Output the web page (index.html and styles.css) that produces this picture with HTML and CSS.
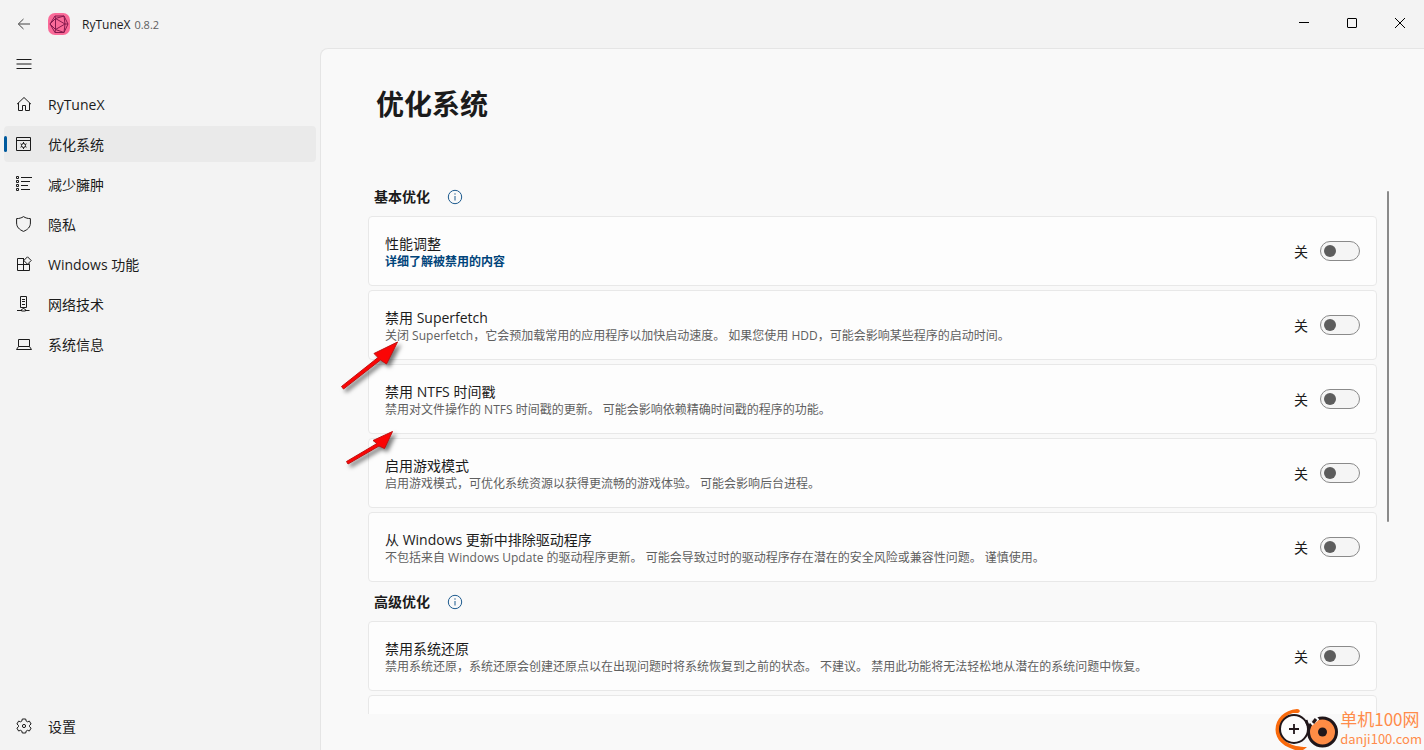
FILE: index.html
```html
<!DOCTYPE html>
<html lang="zh-CN">
<head>
<meta charset="utf-8">
<meta name="viewport" content="width=device-width, initial-scale=1">
<title>RyTuneX</title>
<link rel="stylesheet" href="styles.css">
</head>
<body>
<div class="app">
  <header class="titlebar">
    <button class="back" type="button" aria-label="返回">
      <svg class="icon" viewBox="0 0 16 16"><path d="M14 8H2.500M7.500 3L2.300 8l5.200 5"/></svg>
    </button>
    <svg class="logo" viewBox="0 0 22 22">
      <rect width="22" height="22" rx="7" fill="#fa6a98"/>
      <g fill="none" stroke="#85194d" stroke-width="1" stroke-linejoin="round">
        <path d="M7 3h9l4 8-4 8.500H7L2 11zM7.500 5.500v11L17 11z"/>
        <path d="M7 3l.5 2.500L16 3l1 8h3M2 11l5.500-5.500M2 11l5.500 5.500-.5 3M7.500 16.500l8.500 3 1-8.500"/>
      </g>
    </svg>
    <span class="app-name">RyTuneX</span>
    <span class="app-version">0.8.2</span>
    <div class="window-buttons">
      <button type="button" aria-label="最小化"><svg class="icon black" viewBox="0 0 16 16"><path d="M3 7.500h10"/></svg></button>
      <button type="button" aria-label="最大化"><svg class="icon black" viewBox="0 0 16 16"><rect x="3.500" y="3.500" width="9" height="9" rx=".5"/></svg></button>
      <button type="button" aria-label="关闭"><svg class="icon black" viewBox="0 0 16 16"><path d="M3 3l10 10M13 3L3 13"/></svg></button>
    </div>
  </header>

  <div class="body">
    <nav class="sidebar">
      <button class="menu" type="button" aria-label="菜单">
        <svg class="icon" viewBox="0 0 16 16"><path d="M.5 3.500h15M.5 8h15M.5 12.500h15"/></svg>
      </button>
      <a class="nav-item" href="#home">
        <svg class="icon" viewBox="0 0 16 16"><path d="M1 8.200L8 1.500l7 6.700M2.500 7v7.500h4V9.500h3v5h4V7"/></svg>
        <span>RyTuneX</span></a>
      <a class="nav-item active" href="#optimize">
        <svg class="icon" viewBox="0 0 16 16"><path d="M.5 1.500h14v13H.5zM.5 4.500h14"/><circle cx="7.500" cy="9.500" r="2"/><path d="M7.500 6v1.500M7.500 11.500V13M4.500 7.800l1.300.7M9.200 10.500l1.300.7M4.500 11.200l1.300-.7M9.200 8.500l1.300-.7"/></svg>
        <span>优化系统</span></a>
      <a class="nav-item" href="#debloat">
        <svg class="icon" viewBox="0 0 16 16"><path d="M.5.500h2v2h-2zM.5 4.500h2v2h-2zM.5 8.500h2v2h-2zM.5 12.500h2v2h-2zM5 1.500h11M5 5.500h9M5 9.500h7M5 13.500h9"/></svg>
        <span>减少臃肿</span></a>
      <a class="nav-item" href="#privacy">
        <svg class="icon" viewBox="0 0 16 16"><path d="M7.500.6C5.500 2 3 2.600.6 2.600V7c0 4 2.600 6.600 6.900 8.400 4.300-1.800 6.900-4.400 6.900-8.400V2.600C12 2.600 9.500 2 7.500.6z"/></svg>
        <span>隐私</span></a>
      <a class="nav-item" href="#features">
        <svg class="icon" viewBox="0 0 16 16"><path d="M8 2.500H1.500v12h12V8.500h-12M7.500 2.500v12M13.500 8.500V7.500M11.500.8l3.700 3.700-3.700 3.700-3.700-3.700z"/></svg>
        <span>Windows 功能</span></a>
      <a class="nav-item" href="#network">
        <svg class="icon" viewBox="0 0 16 16"><path d="M4.500.5h6v11h-6zM6 3.500h3M6 5.500h3M6 8.500h3M7.500 11.500v1M1 14.500h4M9.500 14.500h4"/><path d="M5.500 13.500l2-1 2 1v1.500h-4z"/></svg>
        <span>网络技术</span></a>
      <a class="nav-item" href="#system">
        <svg class="icon" viewBox="0 0 16 16"><path d="M2.500 3.500h11v7h-11zM2.500 10.500l-2 3h15l-2-3"/></svg>
        <span>系统信息</span></a>
      <a class="nav-item bottom" href="#settings">
        <svg class="icon" viewBox="0 0 16 16"><path d="M6.300 1h3.400l.5 2.100 1.200.7 2-.7 1.700 2.900-1.600 1.400v1.300l1.600 1.400-1.700 2.900-2-.7-1.200.7L9.700 15H6.300l-.5-2-1.200-.7-2 .7-1.700-2.900 1.600-1.400V7.400L.9 6l1.700-2.900 2 .7 1.200-.7z"/><circle cx="8" cy="8" r="1.600"/></svg>
        <span>设置</span></a>
    </nav>

    <main class="page">
      <h1>优化系统</h1>
      <div class="scroller">
        <section>
          <div class="section-head"><h2>基本优化</h2>
            <button class="info" type="button" aria-label="基本优化说明"><svg viewBox="0 0 16 16"><circle cx="8" cy="8" r="6.700"/><path d="M8 7v4.500M8 4.300v1.400"/></svg></button></div>
          <div class="cards">
            <div class="card"><div class="text"><h3>性能调整</h3><a href="#details">详细了解被禁用的内容</a></div>
              <label class="toggle"><span>关</span><input type="checkbox" role="switch" aria-label="性能调整"></label></div>
            <div class="card"><div class="text"><h3>禁用 Superfetch</h3><p>关闭 Superfetch，它会预加载常用的应用程序以加快启动速度。 如果您使用 HDD，可能会影响某些程序的启动时间。</p></div>
              <label class="toggle"><span>关</span><input type="checkbox" role="switch" aria-label="禁用 Superfetch"></label></div>
            <div class="card"><div class="text"><h3>禁用 NTFS 时间戳</h3><p>禁用对文件操作的 NTFS 时间戳的更新。 可能会影响依赖精确时间戳的程序的功能。</p></div>
              <label class="toggle"><span>关</span><input type="checkbox" role="switch" aria-label="禁用 NTFS 时间戳"></label></div>
            <div class="card"><div class="text"><h3>启用游戏模式</h3><p>启用游戏模式，可优化系统资源以获得更流畅的游戏体验。 可能会影响后台进程。</p></div>
              <label class="toggle"><span>关</span><input type="checkbox" role="switch" aria-label="启用游戏模式"></label></div>
            <div class="card"><div class="text"><h3>从 Windows 更新中排除驱动程序</h3><p>不包括来自 Windows Update 的驱动程序更新。 可能会导致过时的驱动程序存在潜在的安全风险或兼容性问题。 谨慎使用。</p></div>
              <label class="toggle"><span>关</span><input type="checkbox" role="switch" aria-label="从 Windows 更新中排除驱动程序"></label></div>
          </div>
        </section>
        <section>
          <div class="section-head"><h2>高级优化</h2>
            <button class="info" type="button" aria-label="高级优化说明"><svg viewBox="0 0 16 16"><circle cx="8" cy="8" r="6.700"/><path d="M8 7v4.500M8 4.300v1.400"/></svg></button></div>
          <div class="cards">
            <div class="card"><div class="text"><h3>禁用系统还原</h3><p>禁用系统还原，系统还原会创建还原点以在出现问题时将系统恢复到之前的状态。 不建议。 禁用此功能将无法轻松地从潜在的系统问题中恢复。</p></div>
              <label class="toggle"><span>关</span><input type="checkbox" role="switch" aria-label="禁用系统还原"></label></div>
            <div class="card"></div>
          </div>
        </section>
      </div>
      <div class="scroll-thumb"></div>
    </main>
  </div>
</div>

<svg class="arrow arrow-one" viewBox="0 0 70 60" width="70" height="60">
  <path d="M4.500 46.500L41 17.500l-4-4L60.500 2 49.500 24 43.500 20 6.500 49z"/>
</svg>
<svg class="arrow arrow-two" viewBox="0 0 70 50" width="70" height="50">
  <path d="M5.500 32.500L36 14.500 32 11.500 51.500 2.500 43.500 19.500 38 17 7 35z"/>
</svg>

<div class="watermark">
  <svg viewBox="0 0 64 44" width="64" height="44">
    <path d="M22 1C9 2 .5 11 .5 21.500S9 40 25 43c3-1 5-2 7-4C16 39 5 33 5 21.500 5 14 10 7 18 5h5c3-1 2-4-1-4z" fill="#f96a0c"/>
    <circle cx="19" cy="21" r="14" fill="#fcfcfc" stroke="#20161a" stroke-width="2"/>
    <circle cx="47.500" cy="24" r="14" fill="#ff8c45" stroke="#20161a" stroke-width="3"/>
    <path d="M31 12c1 4 2 6 4 7" fill="none" stroke="#20161a" stroke-width="3"/>
    <path d="M36 16l7-6" stroke="#fcfcfc" stroke-width="4"/>
    <path d="M41 11l-3 4" stroke="#20161a" stroke-width="3"/>
    <path d="M14 21h10M19 16v10" stroke="#20161a" stroke-width="1.800"/>
    <circle cx="47.500" cy="24" r="4.500" fill="#20161a"/>
  </svg>
  <div class="watermark-text"><span>单机100网</span><small>danji100.com</small></div>
</div>
</body>
</html>
```
FILE: styles.css
```css
* { box-sizing: border-box; }
body {
  margin: 0;
  background: #f3f3f3;
  color: #1b1b1b;
  font: 14px/20px "Open Sans", "Noto Sans CJK SC", sans-serif;
}
button { padding: 0; border: 0; background: none; color: inherit; font: inherit; }
a { color: inherit; text-decoration: none; }
h1, h2, h3, p { margin: 0; }
.app { display: flex; flex-direction: column; height: 100vh; overflow: hidden; }
.icon { width: 16px; height: 16px; flex: none; fill: none; stroke: #1b1b1b; stroke-width: 1; display: block; }
.black { stroke: #000; }

.titlebar { display: flex; align-items: center; height: 48px; padding-left: 16px; flex: none; }
.back { margin-right: 16px; }
.back .icon { stroke: #444; }
.logo { width: 22px; height: 22px; margin-right: 12px; }
.app-name, .app-version { font-size: 12px; line-height: 16px; padding-top: 2px; }
.app-name { font-size: 12px; }
.app-version { margin-left: 4px; color: #5e5e5e; font-size: 11px; }
.window-buttons { display: flex; margin-left: auto; }
.window-buttons button { display: grid; place-items: center; width: 48px; height: 48px; padding-bottom: 2px; }

.body { display: flex; flex: 1; min-height: 0; }
.sidebar { display: flex; flex-direction: column; gap: 4px; width: 320px; flex: none; padding: 0 4px 6px; }
.menu { width: 40px; height: 34px; padding-bottom: 2px; display: grid; place-items: center; }
.nav-item {
  display: flex; align-items: center; gap: 16px;
  height: 36px; padding-left: 12px; border-radius: 4px; position: relative;
}
.nav-item span { padding-top: 2px; }
.active { background: #eaeaea; }
.active::before {
  content: ""; position: absolute; left: 0; top: 10px;
  width: 3px; height: 16px; border-radius: 2px; background: #005a9e;
}
.bottom { margin-top: auto; }

.page {
  position: relative; flex: 1; min-width: 0;
  display: flex; flex-direction: column;
  padding: 35px 47px 36px;
  background: #f9f9f9;
  border: solid #e5e5e5; border-width: 1px 0 0 1px; border-top-left-radius: 8px;
}
h1 { padding-left: 8px; font-size: 28px; line-height: 40px; font-weight: 700; }
.scroller { flex: 1; min-height: 0; margin-top: 53px; overflow: auto; scrollbar-width: none; }
.section-head { display: flex; align-items: center; gap: 17px; height: 39px; padding-left: 6px; }
h2 { font-size: 14px; line-height: 20px; font-weight: 700; }
.info svg { display: block; width: 16px; height: 16px; fill: none; stroke: #1c5a8e; stroke-width: 1; }
.cards { display: flex; flex-direction: column; gap: 4px; }
.card {
  display: flex; align-items: center; justify-content: space-between; gap: 16px;
  min-height: 70px; padding: 0 16px;
  background: #fdfdfd; border: 1px solid #e8e8e8; border-radius: 4px;
}
h3 { font-size: 14px; line-height: 20px; font-weight: 400; }
.text { padding-top: 2px; }
.text p, .text a { display: block; font-size: 12px; line-height: 16px; }
.text p { color: #5f5f5f; }
.text a { color: #00447a; font-weight: 700; }
.toggle { display: flex; align-items: center; gap: 12px; flex: none; }
.toggle span { padding-top: 2px; }
.toggle input {
  appearance: none; width: 40px; height: 20px; margin: 0; padding: 3px;
  border: 1px solid #8a8a8a; border-radius: 10px; background: #f5f5f5;
}
.toggle input::before { content: ""; display: block; width: 12px; height: 12px; border-radius: 50%; background: #5d5d5d; }
.toggle input:checked { background: #005a9e; }
.toggle input:checked::before { margin-left: auto; background: #fff; }
.scroll-thumb { position: absolute; top: 142px; right: 35px; width: 2px; height: 331px; border-radius: 1px; background: #8a8a8a; }

.arrow { position: absolute; overflow: visible; fill: #fb0505; stroke: #c01010; stroke-width: 1; filter: drop-shadow(3px 3px 2px #0008); pointer-events: none; }
.arrow-one { left: 337px; top: 340px; }
.arrow-two { left: 341px; top: 429px; }

.watermark { position: absolute; right: 2px; bottom: -2px; display: flex; align-items: center; gap: 1px; color: #ff8c4a; font-family: "Noto Sans CJK SC", sans-serif; pointer-events: none; }
.watermark-text { display: flex; flex-direction: column; padding-bottom: 2px; }
.watermark-text span { font-size: 17px; line-height: 20px; }
.watermark-text small { font-size: 13px; line-height: 20px; }
```
